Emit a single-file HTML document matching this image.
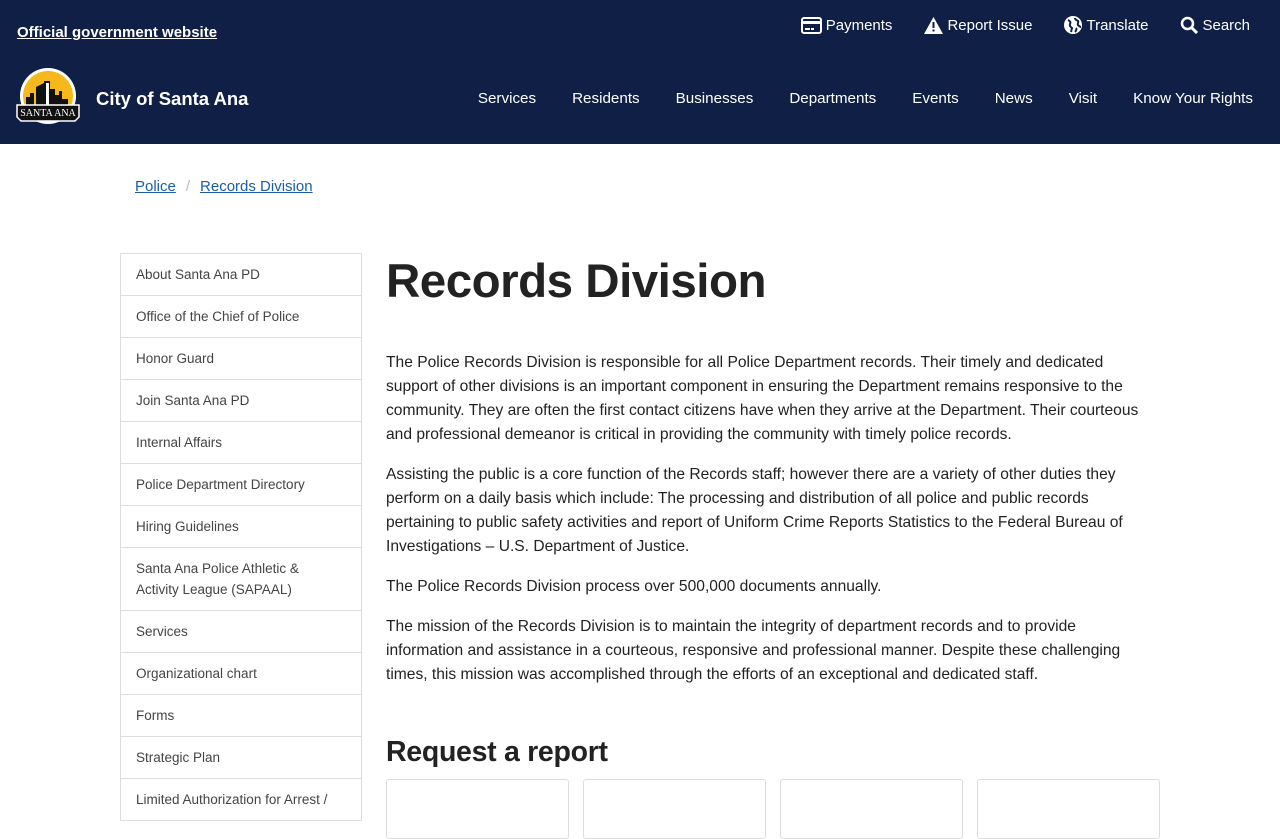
<!DOCTYPE html>
<html><head><meta charset="utf-8"><style>
*{box-sizing:border-box;margin:0;padding:0}
body{width:1280px;height:800px;overflow:hidden;font-family:"Liberation Sans",sans-serif;background:#fff;color:#222}
.hdr{background:#0f1f45;height:144px;position:relative;color:#fff}
.gov{position:absolute;left:17px;top:24px;font-size:15px;font-weight:bold;text-decoration:underline}
.util{position:absolute;top:16px;right:30px;display:flex;gap:32px;font-size:15px}
.util span{display:flex;align-items:center;gap:4px}
.logo{position:absolute;left:16px;top:67px}
.city{position:absolute;left:96px;top:88px;font-size:18.5px;font-weight:bold}
.nav{position:absolute;right:27px;top:90px;display:flex;gap:36px;font-size:15.2px}
.bc{position:absolute;top:178px;left:135px;font-size:15px;color:#1a5da8}
.bc a{color:#1a5da8;text-decoration:underline}
.bc i{color:#bbb;font-style:normal;margin:0 10px}
.side{position:absolute;left:120px;top:253px;width:242px;border:1px solid #ddd;border-bottom:none}
.side div{border-bottom:1px solid #ddd;padding:0 15px;height:42px;display:flex;align-items:center;font-size:13.5px;color:#444;line-height:21px}
.side div.t{height:63px}
.main{position:absolute;left:386px;top:251px;width:774px}
h1{font-size:47.5px;font-weight:bold;color:#222;line-height:62px;margin-bottom:38px;letter-spacing:-0.5px}
p{font-size:15.6px;line-height:24px;margin-bottom:16px;color:#222;width:765px}
h2{font-size:28.5px;font-weight:bold;margin-top:47px;line-height:36px;letter-spacing:-0.3px}
.cards{display:flex;gap:14px;margin-top:9px}
.cards div{width:183px;height:60px;border:1px solid #ddd;border-radius:3px}
</style></head><body>
<div class="hdr">
<div class="gov">Official government website</div>
<div class="util">
<span><svg width="21" height="17" viewBox="0 0 21 17"><rect x="1" y="1" width="19" height="15" rx="2" fill="none" stroke="#fff" stroke-width="2"/><rect x="1" y="4" width="19" height="3" fill="#fff"/><rect x="4" y="11" width="5" height="2" fill="#fff"/><rect x="10" y="11" width="3" height="2" fill="#fff"/></svg>Payments</span>
<span><svg width="19" height="17" viewBox="0 0 19 17"><path d="M9.5 0L19 17H0z" fill="#fff"/><rect x="8.5" y="5" width="2" height="6" fill="#0f1f45"/><rect x="8.5" y="12.5" width="2" height="2" fill="#0f1f45"/></svg>Report Issue</span>
<span><svg width="18" height="18" viewBox="0 0 18 18"><circle cx="9" cy="9" r="9" fill="#fff"/><path d="M4 4c2 1 3 2 2 4s1 3 2 4l-1 4M11 2c0 2 2 2 3 3s-1 3 0 4 2 2 3 2M12 12c1 1 0 3-1 4" stroke="#0f1f45" stroke-width="2" fill="none"/></svg>Translate</span>
<span><svg width="18" height="18" viewBox="0 0 18 18"><circle cx="7.5" cy="7.5" r="5.5" fill="none" stroke="#fff" stroke-width="2.5"/><path d="M11.5 11.5L17 17" stroke="#fff" stroke-width="3"/></svg>Search</span>
</div>
<svg class="logo" width="64" height="58" viewBox="0 0 64 58"><circle cx="32" cy="29" r="28" fill="#fff"/><circle cx="32" cy="29" r="25" fill="#f6b81b"/><path d="M10 44V30h4v-4h4v18zM20 44V20l8-4v28zM28 44V14h6v30zM34 44V22h5v22zM39 44V28h4v-4h3v20zM46 44V32h6v12z" fill="#111"/><path d="M30 44V16h3v28z" fill="#fff"/><path d="M1 38h62v12l-4 4H5l-4-4z" fill="#111" stroke="#fff" stroke-width="1.5"/><text x="32" y="49" font-size="10" fill="#fff" text-anchor="middle" font-family="Liberation Serif,serif">SANTA ANA</text></svg>
<div class="city">City of Santa Ana</div>
<div class="nav"><span>Services</span><span>Residents</span><span>Businesses</span><span>Departments</span><span>Events</span><span>News</span><span>Visit</span><span>Know Your Rights</span></div>
</div>
<div class="bc"><a>Police</a><i>/</i><a>Records Division</a></div>
<div class="side">
<div>About Santa Ana PD</div><div>Office of the Chief of Police</div><div>Honor Guard</div><div>Join Santa Ana PD</div><div>Internal Affairs</div><div>Police Department Directory</div><div>Hiring Guidelines</div><div class="t">Santa Ana Police Athletic &amp;<br>Activity League (SAPAAL)</div><div>Services</div><div>Organizational chart</div><div>Forms</div><div>Strategic Plan</div><div>Limited Authorization for Arrest /</div>
</div>
<div class="main">
<h1>Records Division</h1>
<p>The Police Records Division is responsible for all Police Department records. Their timely and dedicated support of other divisions is an important component in ensuring the Department remains responsive to the community. They are often the first contact citizens have when they arrive at the Department. Their courteous and professional demeanor is critical in providing the community with timely police records.</p>
<p>Assisting the public is a core function of the Records staff; however there are a variety of other duties they perform on a daily basis which include: The processing and distribution of all police and public records pertaining to public safety activities and report of Uniform Crime Reports Statistics to the Federal Bureau of Investigations – U.S. Department of Justice.</p>
<p>The Police Records Division process over 500,000 documents annually.</p>
<p>The mission of the Records Division is to maintain the integrity of department records and to provide information and assistance in a courteous, responsive and professional manner. Despite these challenging times, this mission was accomplished through the efforts of an exceptional and dedicated staff.</p>
<h2>Request a report</h2>
<div class="cards"><div></div><div></div><div></div><div></div></div>
</div>
</body></html>
